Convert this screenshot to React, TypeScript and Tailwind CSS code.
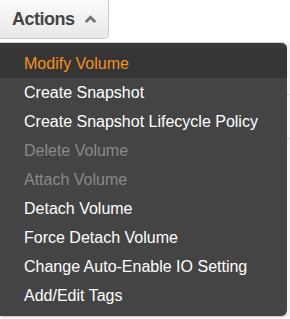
const items = [
  { label: 'Modify Volume', state: 'active' },
  { label: 'Create Snapshot', state: 'normal' },
  { label: 'Create Snapshot Lifecycle Policy', state: 'normal' },
  { label: 'Delete Volume', state: 'disabled' },
  { label: 'Attach Volume', state: 'disabled' },
  { label: 'Detach Volume', state: 'normal' },
  { label: 'Force Detach Volume', state: 'normal' },
  { label: 'Change Auto-Enable IO Setting', state: 'normal' },
  { label: 'Add/Edit Tags', state: 'normal' },
];

export default function App() {
  return (
    <div className="w-[290px] h-[319px] bg-white overflow-hidden font-['Liberation_Sans',Arial,sans-serif]">
      {/* Actions button */}
      <div className="flex items-center h-[39px] w-[109px] pl-3 gap-[9px] border-r border-b border-[#c9c9c9] rounded-br-[5px] bg-gradient-to-b from-[#fbfbfb] to-[#e8e8e8]">
        <span className="text-[18px] font-bold text-[#444] tracking-[-0.5px] pt-[1px]">Actions</span>
        <svg width="13" height="8" viewBox="0 0 13 8" className="mt-[-1px]">
          <path d="M1.8 7 L6.5 2.3 L11.2 7" fill="none" stroke="#737373" strokeWidth="2.8" strokeLinejoin="miter" />
        </svg>
      </div>

      {/* Menu */}
      <div className="flex mt-[3px]">
        <div className="w-[287px] h-[274px] bg-[#444] border-t border-[#d6d6d6] rounded-tr-[6px] rounded-br-[6px] flex flex-col shadow-[1px_1px_2px_rgba(0,0,0,0.25)]">
          <div className="h-[6px] bg-[#3a3a3a] rounded-tr-[6px]" />
          {items.map((item) => (
            <div
              key={item.label}
              className={`h-[29px] flex items-center pl-6 text-[16px] pt-[1px] ${
                item.state === 'active'
                  ? 'bg-[#353535] text-[#f7901e]'
                  : item.state === 'disabled'
                  ? 'text-[#8a8a8a]'
                  : 'text-white'
              }`}
            >
              {item.label}
            </div>
          ))}
        </div>
        <div className="flex-1 h-[274px] bg-[#f4f4f4] flex flex-col">
          <div className="h-[9px]" />
          <div className="h-[44px] border-b border-[#ddd]" />
          <div className="h-[44px] border-b border-[#ddd]" />
        </div>
      </div>
    </div>
  );
}
